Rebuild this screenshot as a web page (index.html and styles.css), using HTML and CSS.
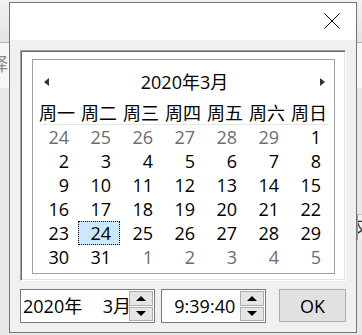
FILE: index.html
```html
<!DOCTYPE html>
<html lang="zh-CN">
<head>
  <meta charset="UTF-8">
  <meta name="viewport" content="width=device-width, initial-scale=1.0">
  <title>选择日期</title>
  <link rel="stylesheet" href="styles.css">
</head>
<body>
  <div class="desk">
    <div class="desk-top"></div>
    <div class="desk-row"><span class="desk-text">择</span></div>
    <div class="desk-side"><span>又</span></div>
  </div>
  <div class="dialog">
    <div class="titlebar">
      <svg class="close" width="16" height="16" viewBox="0 0 16 16">
        <path d="M0.5 0.5L15.5 15.5M15.5 0.5L0.5 15.5" stroke="#000" stroke-width="1" fill="none"/>
      </svg>
    </div>
    <div class="body">
      <div class="frame">
        <div class="cal">
          <div class="cal-head">
            <span class="arr arr-left"></span>
            <span class="cal-title">2020年3月</span>
            <span class="arr arr-right"></span>
          </div>
          <div class="week">
            <span>周一</span><span>周二</span><span>周三</span><span>周四</span><span>周五</span><span>周六</span><span>周日</span>
          </div>
          <div class="rule"></div>
          <div class="days">
            <span class="other">24</span><span class="other">25</span><span class="other">26</span><span class="other">27</span><span class="other">28</span><span class="other">29</span><span>1</span>
            <span>2</span><span>3</span><span>4</span><span>5</span><span>6</span><span>7</span><span>8</span>
            <span>9</span><span>10</span><span>11</span><span>12</span><span>13</span><span>14</span><span>15</span>
            <span>16</span><span>17</span><span>18</span><span>19</span><span>20</span><span>21</span><span>22</span>
            <span>23</span><span class="today">24</span><span>25</span><span>26</span><span>27</span><span>28</span><span>29</span>
            <span>30</span><span>31</span><span class="other">1</span><span class="other">2</span><span class="other">3</span><span class="other">4</span><span class="other">5</span>
          </div>
        </div>
      </div>
      <div class="controls">
        <div class="field field-date">
          <span class="field-text">2020年&#8199;&#8199;3月:24日</span>
          <div class="spin"><span class="spin-btn"><i class="up"></i></span><span class="spin-btn"><i class="down"></i></span></div>
        </div>
        <div class="field field-time">
          <span class="field-text">&#8199;9:39:40</span>
          <div class="spin"><span class="spin-btn"><i class="up"></i></span><span class="spin-btn"><i class="down"></i></span></div>
        </div>
        <button class="ok">OK</button>
      </div>
    </div>
  </div>
</body>
</html>
```

FILE: styles.css
```css
*{
  margin: 0px;
  padding: 0px;
  box-sizing: border-box;
}
body{
  width: 362px;
  height: 335px;
  overflow: hidden;
  background: #e8e8e8;
  font-family: "Open Sans", "Noto Sans CJK SC", sans-serif;
  color: #000;
  position: relative;
}
/* window behind the dialog */
.desk{
  position: absolute;
  left: 0;
  top: 0;
  width: 362px;
  height: 335px;
}
.desk-top{
  height: 43px;
  background: linear-gradient(#f2f2f2, #e4e4e4);
  border-bottom: 1px solid #b4b4b4;
}
.desk-row{
  height: 45px;
  background: #f7f7f7;
  position: relative;
  overflow: hidden;
}
.desk-text{
  position: absolute;
  left: -10px;
  top: 11px;
  font-size: 18px;
  line-height: 20px;
  color: #8a8a8a;
}
.desk-side{
  position: absolute;
  left: 357px;
  top: 214px;
  width: 20px;
  height: 26px;
  border-left: 1px solid #9a9a9a;
  border-top: 1px solid #c8c8c8;
  background: #f0f0f0;
  overflow: hidden;
}
.desk-side span{
  display: block;
  margin-left: -4px;
  font-size: 16px;
  line-height: 24px;
  color: #333;
}
.dialog{
  position: absolute;
  left: 9px;
  top: 2px;
  width: 348px;
  height: 331px;
  border: 1px solid #747474;
  background: #f0f0f0;
  display: flex;
  flex-direction: column;
}
.titlebar{
  height: 37px;
  background: #fff;
  display: flex;
  justify-content: flex-end;
  align-items: flex-start;
  padding: 10px 16px 0 0;
}
.close{
  display: block;
}
.body{
  flex: 1;
  padding: 10px 10px 0 10px;
}
.frame{
  width: 326px;
  height: 231px;
  background: #fff;
  border: 1px solid;
  border-color: #a0a0a0 #fff #fff #a0a0a0;
  box-shadow: inset 1px 1px 0 #696969, inset -1px -1px 0 #e3e3e3;
  padding: 8px 10px 6px 11px;
}
.cal{
  height: 215px;
  border: 1px solid #a0a0a0;
  padding: 0 2px 0 3px;
}
.cal-head{
  height: 43px;
  display: flex;
  align-items: center;
  padding: 0 7px 0 8px;
}
.cal-title{
  flex: 1;
  text-align: center;
  font-size: 18px;
  line-height: 24px;
}
.arr{
  width: 0;
  height: 0;
  border-top: 4px solid transparent;
  border-bottom: 4px solid transparent;
}
.arr-left{
  border-right: 5px solid #333;
}
.arr-right{
  border-left: 5px solid #333;
}
.week{
  display: grid;
  grid-template-columns: repeat(7, 42px);
  height: 21px;
}
.week span{
  text-align: center;
  font-size: 18px;
  line-height: 21px;
}
.rule{
  height: 1px;
  margin: 0 4px;
  background: #e6e6e6;
}
.days{
  display: grid;
  grid-template-columns: repeat(7, 42px);
  grid-auto-rows: 24px;
}
.days span{
  text-align: right;
  padding-right: 9px;
  font-size: 18px;
  line-height: 24px;
}
.days .other{
  color: #6d6d6d;
}
.days .today{
  background: #cce8ff;
  border: 1px dotted #000;
  padding-right: 8px;
  line-height: 22px;
}
.controls{
  display: flex;
  align-items: flex-start;
  margin-top: 8px;
}
.field{
  height: 34px;
  border: 1px solid #7a7a7a;
  background: #fff;
  display: flex;
  align-items: center;
}
.field-date{
  width: 135px;
}
.field-time{
  width: 105px;
  margin-left: 6px;
}
.field-text{
  flex: 1;
  overflow: hidden;
  white-space: nowrap;
  padding-left: 2px;
  font-size: 18px;
  line-height: 24px;
}
.spin{
  width: 24px;
  height: 30px;
  margin-right: 1px;
  display: flex;
  flex-direction: column;
  gap: 1px;
}
.spin-btn{
  flex: 1;
  border: 1px solid #adadad;
  background: #e5e5e5;
  display: flex;
  align-items: center;
  justify-content: center;
}
.spin i{
  width: 0;
  height: 0;
  border-left: 5px solid transparent;
  border-right: 5px solid transparent;
}
.spin .up{
  border-bottom: 5px solid #000;
}
.spin .down{
  border-top: 5px solid #000;
}
.ok{
  width: 67px;
  height: 33px;
  margin-left: 13px;
  border: 1px solid #adadad;
  background: #e1e1e1;
  font-family: "Open Sans", "Noto Sans CJK SC", sans-serif;
  font-size: 18px;
  line-height: 24px;
  color: #000;
}
```
